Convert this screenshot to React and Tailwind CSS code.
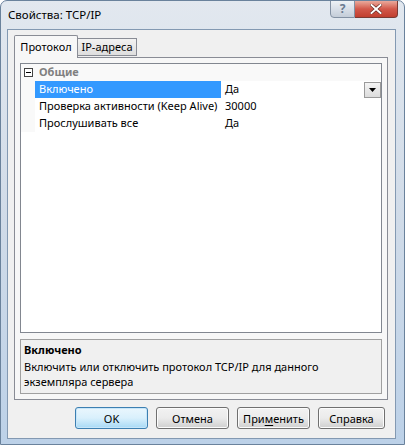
const ROWS = [
  { name: 'Включено', value: 'Да', selected: true },
  { name: 'Проверка активности (Keep Alive)', value: '30000' },
  { name: 'Прослушивать все', value: 'Да' },
];

const BUTTONS = [
  { label: 'OK', w: 'w-[73px]', primary: true },
  { label: 'Отмена', w: 'w-[73px]' },
  { label: 'Применить', w: 'w-[73px]', mnemonic: 3 },
  { label: 'Справка', w: 'w-[67px]' },
];

function DialogButton({ label, w, primary, mnemonic }) {
  const text =
    mnemonic != null ? (
      <>
        {label.slice(0, mnemonic)}
        <span className="underline underline-offset-2">{label[mnemonic]}</span>
        {label.slice(mnemonic + 1)}
      </>
    ) : (
      label
    );
  return (
    <button
      className={`${w} h-[22px] rounded-[3px] border text-[11px] leading-none text-black ${
        primary
          ? 'border-[#3c7fb1] bg-gradient-to-b from-[#eaf6fd] via-[#d9f0fc] to-[#a7d9f5] shadow-[inset_0_0_0_1px_#c7e6f9]'
          : 'border-[#707070] bg-gradient-to-b from-[#f2f2f2] via-[#ebebeb] to-[#cfcfcf] shadow-[inset_0_0_0_1px_#fcfcfc]'
      }`}
    >
      {text}
    </button>
  );
}

export default function App() {
  return (
    <div className="w-[405px] h-[445px] flex flex-col bg-gradient-to-b from-[#e2e8ef] via-[#d0dbe8] to-[#bcd1e8] border border-[#6a829c] rounded-t-[7px] font-['Noto_Sans',sans-serif] text-black overflow-hidden">
      {/* Title bar */}
      <div className="h-[28px] flex items-start shrink-0">
        <span className="pl-[7px] pt-[6px] text-[11.5px] leading-[16px]">Свойства: TCP/IP</span>
        <div className="ml-auto mr-[6px] flex -mt-px">
          <div className="w-[25px] h-[18px] flex items-center justify-center rounded-bl-[4px] border border-[#8391a3] bg-gradient-to-b from-[#eef2f6] via-[#d8dfe8] to-[#c4cdd8] text-[12px] font-bold text-[#6a7b90] leading-none">
            ?
          </div>
          <div className="w-[43px] h-[18px] flex items-center justify-center rounded-br-[4px] border border-l-0 border-[#7a3a33] bg-gradient-to-b from-[#e9a99c] via-[#d2584a] to-[#c13f2f]">
            <svg width="12" height="10" viewBox="0 0 12 10">
              <path d="M1.5 1 L10.5 9 M10.5 1 L1.5 9" stroke="#5b2019" strokeWidth="3.2" strokeLinecap="square" />
              <path d="M1.5 1 L10.5 9 M10.5 1 L1.5 9" stroke="#ffffff" strokeWidth="2" strokeLinecap="square" />
            </svg>
          </div>
        </div>
      </div>

      {/* Client area */}
      <div className="flex-1 ml-[6px] mr-[8px] mb-[5px] border border-[#8399b2] bg-[#f0f0f0] flex flex-col pl-[6px] pr-[7px] pt-[5px]">
        {/* Tabs */}
        <div className="flex items-end h-[22px] relative z-10">
          <div className="w-[64px] h-[23px] -mb-px flex items-center justify-center border border-b-0 border-[#898c95] bg-[#f7f7f7] rounded-t-[2px] text-[11px]">
            Протокол
          </div>
          <div className="w-[59px] h-[18px] flex items-center justify-center border border-l-0 border-[#898c95] bg-gradient-to-b from-[#f2f2f2] to-[#dedede] text-[11px] mb-px">
            IP-адреса
          </div>
        </div>

        {/* Tab page */}
        <div className="h-[343px] border border-[#898c95] bg-[#f7f7f7] px-[5px] pt-[5px] pb-[5px] flex flex-col gap-[6px]">
          {/* Property grid */}
          <div className="h-[271px] border border-[#828790] bg-white flex flex-col text-[11px]">
            <div className="h-[17px] flex items-center bg-[#f9f9f9]">
              <div className="w-[15px] flex justify-center">
                <div className="w-[9px] h-[9px] border border-[#444] bg-white flex items-center justify-center">
                  <div className="w-[5px] h-px bg-black" />
                </div>
              </div>
              <span className="pl-[3px] font-bold text-[#808080]">Общие</span>
            </div>
            {ROWS.map((r) => (
              <div key={r.name} className="h-[17px] flex">
                <div className="w-[14px] bg-[#f9f9f9]" />
                <div
                  className={`w-[186px] pl-[4px] flex items-center whitespace-nowrap ${
                    r.selected ? 'bg-[#3399ff] text-white' : ''
                  }`}
                >
                  {r.name}
                </div>
                <div className="flex-1 flex items-center pl-[4px]">
                  <span className="flex-1">{r.value}</span>
                  {r.selected && (
                    <div className="w-[17px] h-[16px] border border-[#9a9a9a] bg-gradient-to-b from-[#f4f4f4] to-[#dcdcdc] flex items-center justify-center">
                      <svg width="7" height="4" viewBox="0 0 7 4">
                        <path d="M0 0 H7 L3.5 4 Z" fill="#000" />
                      </svg>
                    </div>
                  )}
                </div>
              </div>
            ))}
          </div>

          {/* Description */}
          <div className="h-[55px] border border-[#a0a0a0] bg-[#f0f0f0] pl-[3px] pt-[2px] text-[11px] leading-[15px]">
            <div className="font-bold">Включено</div>
            <div className="mt-[2px]">
              Включить или отключить протокол TCP/IP для данного
              <br />
              экземпляра сервера
            </div>
          </div>
        </div>

        {/* Buttons */}
        <div className="flex justify-end gap-[8px] mt-[7px] pr-[3px]">
          {BUTTONS.map((b) => (
            <DialogButton key={b.label} {...b} />
          ))}
        </div>
      </div>
    </div>
  );
}
